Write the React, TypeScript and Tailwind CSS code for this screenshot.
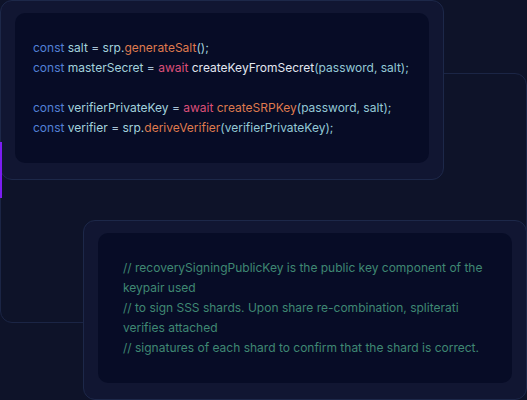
import { type FC, type ReactNode } from "react";

const C = {
  kw: "text-[#5280d6]",
  id: "text-[#a3d2dd]",
  op: "text-[#a9c3d6]",
  fn: "text-[#df7a4e]",
  aw: "text-[#dc4f78]",
  call: "text-[#e2e7f0]",
  arg: "text-[#94c9d6]",
};

const Card: FC<{ className?: string; children: ReactNode }> = ({ className, children }) => (
  <div
    className={`relative z-10 w-[444px] h-[180px] rounded-[12px] border border-[#1d2849] bg-[#111632] px-[14px] pt-[12px] ${className ?? ""}`}
  >
    <div className="h-[150px] rounded-[10px] bg-[#070c26]">{children}</div>
  </div>
);

const App: FC = () => {
  return (
    <div className="relative w-[527px] h-[400px] overflow-hidden bg-[#0e1329] font-['Inter',sans-serif] text-[12px] leading-[20px]">
      <Card>
        <pre className="px-[18px] py-[25px] font-['Inter',sans-serif] whitespace-pre">
          <div>
            <span className={C.kw}>const</span> <span className={C.id}>salt</span>{" "}
            <span className={C.op}>=</span> <span className={C.id}>srp.</span>
            <span className={C.fn}>generateSalt</span>
            <span className={C.id}>();</span>
          </div>
          <div>
            <span className={C.kw}>const</span> <span className={C.id}>masterSecret</span>{" "}
            <span className={C.op}>=</span> <span className={C.aw}>await</span>{" "}
            <span className={C.call}>createKeyFromSecret</span>
            <span className={C.arg}>(password, salt);</span>
          </div>
          <div>&nbsp;</div>
          <div>
            <span className={C.kw}>const</span> <span className={C.id}>verifierPrivateKey</span>{" "}
            <span className={C.op}>=</span> <span className={C.aw}>await</span>{" "}
            <span className={C.fn}>createSRPKey</span>
            <span className={C.arg}>(password, salt);</span>
          </div>
          <div>
            <span className={C.kw}>const</span> <span className={C.id}>verifier</span>{" "}
            <span className={C.op}>=</span> <span className={C.id}>srp.</span>
            <span className={C.fn}>deriveVerifier</span>
            <span className={C.arg}>(verifierPrivateKey);</span>
          </div>
        </pre>
      </Card>

      <div className="-mt-[107px] w-[527px] h-[250px] rounded-[12px] border border-[#1b2545]" />

      <Card className="-mt-[103px] ml-[83px]">
        <div className="pl-[25px] pr-[24px] py-[25px] text-[#3f8873]">
          <p>// recoverySigningPublicKey is the public key component of the keypair used</p>
          <p>// to sign SSS shards. Upon share re-combination, spliterati verifies attached</p>
          <p>// signatures of each shard to confirm that the shard is correct.</p>
        </div>
      </Card>

      <div className="absolute left-0 top-[142px] w-[2px] h-[56px] bg-[#7b1df2] z-20" />
    </div>
  );
};

export default App;
